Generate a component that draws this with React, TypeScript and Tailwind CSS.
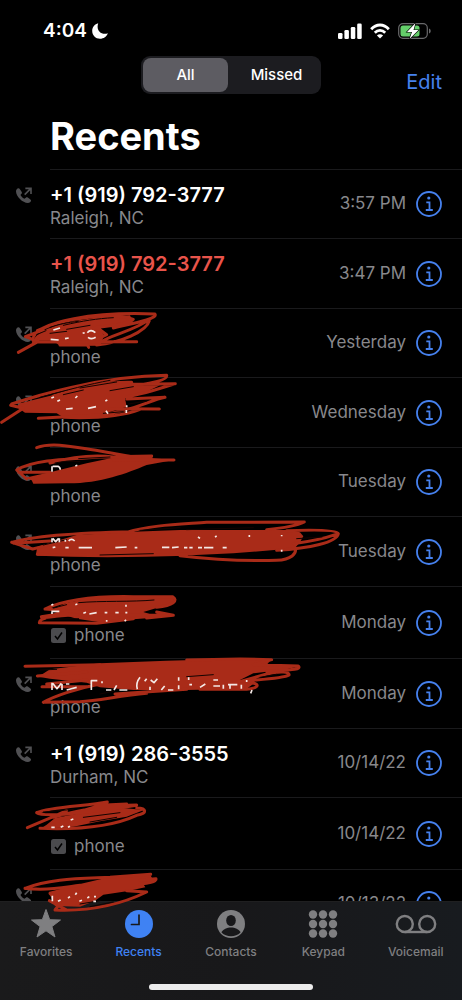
import { useState } from 'react';

type Scribble = {
  viewBox: string;
  mass: string;
  strokes: string;
  gaps?: string;
  flecks?: string;
};

type Call = {
  id: number;
  name?: string;
  detail: string;
  date: string;
  outgoing?: boolean;
  missed?: boolean;
  tagged?: boolean;
  scribble?: Scribble;
};

// Scribble drawings use 3 units per pixel, measured from the top of their row
const calls: Call[] = [
  { id: 1, name: '+1 (919) 792-3777', detail: 'Raleigh, NC', date: '3:57 PM', outgoing: true },
  { id: 2, name: '+1 (919) 792-3777', detail: 'Raleigh, NC', date: '3:47 PM', missed: true },
  {
    id: 3,
    detail: 'phone',
    date: 'Yesterday',
    outgoing: true,
    scribble: {
      viewBox: '0 24 720 210',
      mass: 'M100 122C110 92 180 68 260 58L300 50 390 46 396 60 370 74 300 80 312 108 300 137 180 138 160 122Z',
      strokes:
        'M55 157L115 124 76 110 130 90M98 120C104 60 300 35 465 42C475 56 400 70 340 84M112 92C200 50 340 38 400 58C385 74 330 76 280 84M448 62C440 95 360 128 290 135M452 56C400 95 330 104 300 128M100 126L410 125M180 135H262L266 142M290 82L320 104 260 132',
      gaps: 'M150 82C180 72 200 68 235 64M190 76C250 62 290 56 340 53M200 88L270 76M110 104L138 92M150 100L200 94',
      flecks: 'M152 118L176 120M160 90L180 84M195 116L206 114M248 100L254 98M262 98Q272 86 286 98M264 112Q274 120 287 112',
    },
  },
  {
    id: 4,
    detail: 'phone',
    date: 'Wednesday',
    outgoing: true,
    scribble: {
      viewBox: '0 231 720 210',
      mass: 'M60 310L160 285 330 247 395 248 410 256 480 256 430 280 375 295 380 320 300 345 190 352 170 340 75 338 50 320Z',
      strokes:
        'M5 367L70 325 32 316M35 312C100 290 300 228 500 226C505 245 420 254 390 260M160 288C250 260 330 245 395 247M526 251L400 253M522 252C460 272 420 284 380 290M115 355L300 345C400 335 450 300 495 292L380 297M330 326L478 327M190 352C300 356 370 348 420 328',
      gaps: 'M120 292C200 270 270 252 330 241M190 284L250 270M330 272L400 260M240 264L350 246M386 312L440 303M310 340L370 335',
      flecks: 'M154 294L162 291M172 304L180 300M198 327L218 325M226 294L232 288M264 325L288 320M318 332L324 341M380 316V322M379 330V339M316 303L322 300',
    },
  },
  {
    id: 5,
    detail: 'phone',
    date: 'Tuesday',
    outgoing: true,
    scribble: {
      viewBox: '0 36 720 210',
      mass: 'M75 128L150 112 260 85 360 64 455 60 458 70 522 75 440 90C380 115 300 146 200 145L100 146 95 136Z',
      strokes:
        'M110 38C160 20 230 38 300 48L400 66M50 105C100 74 200 72 300 66L455 63M50 105L80 132M56 112L150 112M150 84C230 62 290 60 340 66M340 74L522 75',
      gaps: 'M165 84C190 78 210 78 240 80M236 71L330 66',
      flecks: 'M156 94V110M158 94H174Q182 98 180 104M226 93L232 91',
    },
  },
  {
    id: 6,
    detail: 'phone',
    date: 'Tuesday',
    outgoing: true,
    scribble: {
      viewBox: '0 243 720 210',
      mass: 'M108 358L112 335 230 300 400 290 540 285 860 285 900 292 910 304 900 322 884 340 700 355 540 362 112 362Z',
      strokes:
        'M35 322C100 302 250 293 400 290M35 322L98 342 180 322M40 325L150 318M380 292C450 270 540 268 620 262L913 261C890 272 840 280 800 284M860 287C940 284 1012 284 1015 296C1010 322 930 340 830 346M880 326C940 318 980 308 1008 298M540 362C640 374 750 378 830 376C875 374 890 355 886 340M112 358C300 366 440 362 560 358',
      gaps: 'M890 311L966 306M420 286L540 278M560 284L760 278M130 330L200 314M300 360L460 356',
      flecks:
        'M156 322V310M158 310L167 320 176 310M178 310V322M196 320V314M206 318Q214 308 224 318M158 338L166 336M196 338H206M236 338H276M346 338L380 336M404 338H412M486 337H508M516 338L536 336M552 338H562M568 338H578M594 338H606M612 338H640M668 338H680M594 306L600 310M748 300V306M845 300V304M845 350V344M645 306L650 303',
    },
  },
  {
    id: 7,
    detail: 'phone',
    date: 'Monday',
    tagged: true,
    scribble: {
      viewBox: '0 18 720 210',
      mass: 'M150 92L200 68 270 55 400 50 518 52 526 65 470 84 430 96 480 112 380 119 300 127 230 116Z',
      strokes:
        'M118 128L290 130 400 116M118 128C118 108 180 108 230 104M135 87C200 56 300 48 400 50L518 50C536 62 520 76 470 82M124 110L200 98M240 106L520 106M135 87L250 96M470 96L520 106 440 114',
      gaps: 'M236 68C300 62 400 66 462 60M140 118L236 116M160 84L200 74',
      flecks: 'M154 94H178M156 102V96M154 76L160 73M226 74L232 72M250 100L258 97M268 102L290 98M314 98H322M346 98H356M376 98H382M320 120V125M374 124L378 119M378 74V80',
    },
  },
  {
    id: 8,
    detail: 'phone',
    date: 'Monday',
    outgoing: true,
    scribble: {
      viewBox: '0 234 720 210',
      mass: 'M115 290L150 268 300 250 500 242 720 236 812 240 800 255 890 260 860 268 760 280 720 300 765 308 740 326 560 330 400 330 300 322 260 308 150 296Z',
      strokes:
        'M75 259L300 254M560 240L720 237 815 239 760 254 895 258C908 270 860 270 800 274M700 310L800 282C840 272 870 275 867 285C850 296 780 298 720 304M740 306C784 310 780 324 740 328L600 328M126 320L260 320M130 367C160 350 230 325 300 312M130 367L240 365C300 362 360 346 440 340M345 342L560 328M140 312L260 300M112 288L260 276',
      gaps: 'M300 342L340 334M780 292L830 283M120 270L170 268M560 290L640 284',
      flecks:
        'M156 330V308M158 310L171 326 184 310M186 330V312M198 312H208M200 330L230 322M274 330V302H292M306 304V310M318 330H334M342 330L350 316M358 330H382M412 328Q406 310 420 292M434 304L440 296M450 330V320M452 300L462 308 472 296M484 330L494 318M504 330H520M536 292V302M536 316V328M566 292V300M568 314H576M600 322L616 312M640 318H660M640 300H654M670 326V314M684 314H712M690 326V316M724 314V326M740 300V306M752 340L756 330',
    },
  },
  { id: 9, name: '+1 (919) 286-3555', detail: 'Durham, NC', date: '10/14/22', outgoing: true },
  {
    id: 10,
    detail: 'phone',
    date: '10/14/22',
    tagged: true,
    scribble: {
      viewBox: '0 201 720 210',
      mass: 'M140 284L165 264 260 246 370 234 432 240 380 260 300 274 220 290 120 297Z',
      strokes:
        'M110 248C150 230 260 228 322 216M110 248C130 262 260 250 410 226M82 293L160 260 200 242M160 262C250 235 350 225 410 225M410 234C440 234 444 250 410 256C350 284 250 300 120 295M240 244L300 226 380 222',
      gaps: 'M250 262L360 248M270 276L350 262M130 246L220 238',
      flecks: 'M154 292H164M182 292L190 288M204 292L210 289M212 270L220 267',
    },
  },
  {
    id: 11,
    detail: 'phone',
    date: '10/13/22',
    outgoing: true,
    scribble: {
      viewBox: '0 417 720 210',
      mass: 'M146 486L240 462 330 441 450 433 456 444 468 450 430 462 436 472 380 484 310 494 285 512 240 530 165 528Z',
      strokes:
        'M75 475C150 445 240 446 330 442L452 433M75 475C150 484 200 470 240 466M420 450L468 446C472 456 440 460 420 462M150 490L180 520 165 540C300 546 390 510 440 486L380 482M148 512L200 540',
      gaps: 'M240 522L300 512M270 530L340 516',
      flecks: 'M157 497V514M174 514L182 510M204 504L210 500M226 494L230 488M238 514L246 511M262 504L268 500M282 500H288M280 514H288',
    },
  },
];

function OutgoingIcon() {
  return (
    <svg viewBox="0 0 24 24" className="w-4 h-4 text-[#505053]" fill="none" stroke="currentColor" strokeWidth="2.4">
      <path
        fill="currentColor"
        stroke="none"
        d="M0 6.500C0 4.500 1.800 2 3.600 2c.9 0 1.700.5 2.300 1.400l2.500 3.700c.7 1.100.7 2-.1 2.900l-1.200 1.400c-.3.4-.3.800 0 1.300 1 1.700 3.100 3.700 4.800 4.600.5.300.9.300 1.300-.1l1.500-1.200c.9-.7 1.900-.7 2.900-.1l3.600 2.300c.9.600 1.400 1.300 1.400 2.200 0 1.900-2.600 3.600-4.700 3.600C10 24 0 14.500 0 6.500Z"
      />
      <path d="M13 11.500 22 2.500M14 2h8.500v8.500" />
    </svg>
  );
}

function InfoIcon() {
  return (
    <svg viewBox="0 0 26 26" className="w-[26px] h-[26px]" fill="none" stroke="currentColor" strokeWidth="1.800">
      <circle cx="13" cy="13" r="12" />
      <circle cx="12.800" cy="7" r="1.600" fill="currentColor" stroke="none" />
      <path d="M10.300 11.300h3.200v7.500M9.800 19h7" />
    </svg>
  );
}

function ScribbleDrawing({ scribble }: { scribble: Scribble }) {
  return (
    <svg
      viewBox={scribble.viewBox}
      className="absolute left-0 top-0 z-20 w-[240px] h-[70px] overflow-visible pointer-events-none"
      fill="none"
      strokeLinecap="round"
      strokeLinejoin="round"
    >
      <path d={scribble.mass} fill="#a92b18" />
      <path d={scribble.strokes} stroke="#a92b18" strokeWidth="9" />
      <path d={scribble.gaps} stroke="#140301" strokeWidth="3" />
      <path d={scribble.flecks} stroke="#f4e9e6" strokeWidth="5" strokeLinecap="butt" />
    </svg>
  );
}

function CallRow({ call }: { call: Call }) {
  return (
    <li className={`relative flex ${call.tagged ? 'h-[72px]' : 'odd:h-[69px] even:h-[70px]'}`}>
      <div className="w-[50px] flex-none pl-4 pt-[18px]">{call.outgoing && <OutgoingIcon />}</div>
      <div className="flex-1 flex justify-between border-t border-[#1a1a1c] pr-5">
        <div className="pt-[13px]">
          <div className={`h-6 text-[20px] leading-6 font-semibold ${call.missed ? 'text-[#e9544b]' : 'text-white'}`}>
            {call.name}
          </div>
          <div className="flex items-center gap-2 text-[17px] leading-[22px] text-[#88888c]">
            {call.tagged && (
              <svg viewBox="0 0 16 16" className="w-4 h-4">
                <rect x="1" y="1" width="15" height="15" rx="2.500" fill="#4b4b4e" />
                <path d="m5 9 2.500 3L12 5.500" fill="none" stroke="#000" strokeWidth="1.500" />
              </svg>
            )}
            {call.detail}
          </div>
        </div>
        <div className="flex items-center gap-[10px]">
          <span className="text-[17px] text-[#88888c]">{call.date}</span>
          <button aria-label="Call details" className="text-[#4681ee]">
            <InfoIcon />
          </button>
        </div>
      </div>
      {call.scribble && <ScribbleDrawing scribble={call.scribble} />}
    </li>
  );
}

const tabs = [
  {
    label: 'Favorites',
    icon: (
      <path
        d="m16 1.500 3.700 10.200 10.800.3-8.600 6.600 3.100 10.400-9-6.200-9 6.200 3.100-10.400L1.500 12l10.800-.3Z"
        fill="currentColor"
        stroke="currentColor"
        strokeLinejoin="round"
      />
    ),
  },
  {
    label: 'Recents',
    icon: (
      <>
        <circle cx="16" cy="16" r="14" fill="currentColor" />
        <path d="M16 7v9.500H8.500" fill="none" stroke="#17191d" strokeWidth="1.700" strokeLinecap="round" />
      </>
    ),
  },
  {
    label: 'Contacts',
    icon: (
      <>
        <circle cx="16" cy="16" r="14" fill="currentColor" />
        <ellipse cx="16" cy="12.500" rx="4.800" ry="5.500" fill="#18181a" />
        <path d="M6.500 24.500c1.500-3.500 5.500-5 9.500-5s8 1.500 9.500 5c-2.500 2.500-6 3.800-9.500 3.800s-7-1.300-9.500-3.800Z" fill="#18181a" />
      </>
    ),
  },
  {
    label: 'Keypad',
    icon: (
      <>
        {[6.500, 16, 25.500].map((y) =>
          [6, 16, 26].map((x) => <circle key={`${x}-${y}`} cx={x} cy={y} r="4.200" fill="currentColor" />)
        )}
      </>
    ),
  },
  {
    label: 'Voicemail',
    icon: (
      <g fill="none" stroke="currentColor" strokeWidth="2.400">
        <circle cx="4.800" cy="16" r="8" />
        <circle cx="27.200" cy="16" r="8" />
        <path d="M4.800 24h22.400" />
      </g>
    ),
  },
];

export default function App() {
  const [filter, setFilter] = useState('All');
  const [tab, setTab] = useState('Recents');
  const visible = filter === 'All' ? calls : calls.filter((c) => c.missed);

  return (
    <main className="min-h-screen bg-black pb-14 font-['Inter',sans-serif]">
      {/* Status bar */}
      <div className="h-14 flex items-center justify-between pt-[6px] pl-[43px] pr-[31px] text-white">
        <div className="flex items-center gap-1">
          <span className="text-[19px] font-semibold">4:04</span>
          <svg viewBox="0 0 18 18" className="w-[18px] h-[18px]" fill="currentColor">
            <path d="M7.200 1.200C3.800 2 1.200 5 1.200 8.700c0 4.500 3.400 8 7.800 8 3.700 0 6.700-2.200 7.800-5.500-1 .4-2 .6-3 .6-4.200 0-7.200-3-7.200-7.100 0-1.200.2-2.400.6-3.500Z" />
          </svg>
        </div>
        <div className="flex items-center gap-2">
          <svg viewBox="0 0 24 16" className="w-6 h-4" fill="currentColor">
            <rect x="0" y="10" width="4.500" height="6" rx="1.300" />
            <rect x="6.400" y="7" width="4.500" height="9" rx="1.300" />
            <rect x="12.800" y="4" width="4.500" height="12" rx="1.300" />
            <rect x="19.200" y="0.500" width="4.500" height="15.500" rx="1.300" />
          </svg>
          <svg viewBox="0 0 20 16" className="w-5 h-4" fill="none" stroke="currentColor" strokeWidth="2.800">
            <path d="M1.200 6.200C6.200.6 13.800.6 18.800 6.200" />
            <path d="M4.800 9.700c3-3 7.400-3 10.400 0" />
            <path d="M6.900 12.400c1.800-1.700 4.400-1.700 6.200 0L10 15.500Z" fill="currentColor" stroke="none" />
          </svg>
          <svg viewBox="0 0 33 16" className="w-[33px] h-4">
            <rect x="0.700" y="0.700" width="28.600" height="14.600" rx="4.200" fill="none" stroke="#68686a" strokeWidth="1.200" />
            <path d="M31 5.500c1.300.5 1.700 1.400 1.700 2.500s-.4 2-1.700 2.500Z" fill="#68686a" />
            <rect x="2.500" y="2.500" width="19" height="11" rx="2.500" fill="#65cf6b" />
            <path d="M17.500 0 9 9h5l-2.500 7L20.500 7h-5Z" fill="#fff" stroke="#000" strokeWidth="1.200" paintOrder="stroke" />
          </svg>
        </div>
      </div>

      {/* Filter and edit */}
      <header>
        <div className="grid grid-cols-[1fr_180px_1fr] items-end">
          <div className="col-start-2 h-[38px] grid grid-cols-2 gap-[6px] p-[2px] rounded-[9px] bg-[#1c1c20]">
            {['All', 'Missed'].map((f) => (
              <button
                key={f}
                onClick={() => setFilter(f)}
                className={`rounded-[8px] text-[15px] font-medium text-white ${filter === f ? 'bg-[#5d5c62]' : ''}`}
              >
                {f}
              </button>
            ))}
          </div>
          <button className="justify-self-end pr-5 text-[20px] leading-6 text-[#4681ee]">Edit</button>
        </div>
        <h1 className="pl-[50px] pt-5 pb-[11px] text-[38px] leading-[44px] font-bold text-white">Recents</h1>
      </header>

      <ul>
        {visible.map((call) => (
          <CallRow key={call.id} call={call} />
        ))}
      </ul>

      {/* Tab bar */}
      <nav className="fixed inset-x-0 bottom-0 z-10 h-[99px] bg-linear-to-r from-[#1a1a1b] via-[#18181a] to-[#181b1f] border-t border-[#1f1f20]">
        <div className="grid grid-cols-5 pt-[6px]">
          {tabs.map((t) => (
            <button
              key={t.label}
              onClick={() => setTab(t.label)}
              className={`flex flex-col items-center gap-1 text-[12px] leading-4 font-medium ${
                tab === t.label ? 'text-[#3f82f3]' : 'text-[#7f7f81]'
              }`}
            >
              <svg viewBox="0 0 32 32" className="w-8 h-8 overflow-visible">
                {t.icon}
              </svg>
              {t.label}
            </button>
          ))}
        </div>
        <div className="mx-auto mt-[24px] w-[164px] h-[6px] rounded-full bg-[#ececec]" />
      </nav>
    </main>
  );
}
